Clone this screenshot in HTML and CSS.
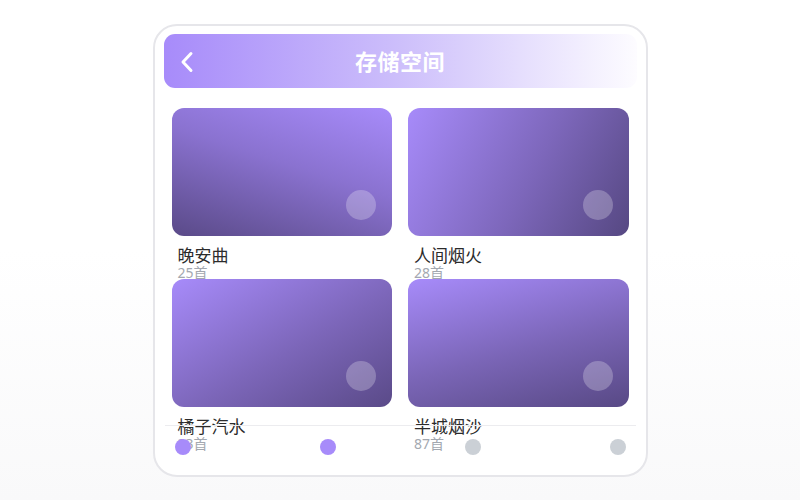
FILE: index.html
```html
<!DOCTYPE html>
<html lang="zh-CN">
<head>
  <meta charset="UTF-8">
  <meta name="viewport" content="width=device-width, initial-scale=1.0">
  <title>存储空间</title>
  <link rel="stylesheet" href="styles.css">
</head>
<body>
  <div class="phone">
    <div class="header">
      <span class="back">
        <svg width="14" height="22" viewBox="0 0 14 22"><polyline points="11,2.5 3,11 11,19.5" fill="none" stroke="#fff" stroke-width="3" stroke-linecap="round" stroke-linejoin="round"/></svg>
      </span>
      <h1>存储空间</h1>
    </div>

    <div class="grid">
      <div class="item">
        <div class="cover cover-1"><span class="play"></span></div>
        <div class="name">晚安曲</div>
        <div class="count">25首</div>
      </div>
      <div class="item">
        <div class="cover cover-2"><span class="play"></span></div>
        <div class="name">人间烟火</div>
        <div class="count">28首</div>
      </div>
      <div class="item">
        <div class="cover cover-3"><span class="play"></span></div>
        <div class="name">橘子汽水</div>
        <div class="count">23首</div>
      </div>
      <div class="item">
        <div class="cover cover-4"><span class="play"></span></div>
        <div class="name">半城烟沙</div>
        <div class="count">87首</div>
      </div>
    </div>

    <div class="nav">
      <span class="dot on"></span>
      <span class="dot on"></span>
      <span class="dot"></span>
      <span class="dot"></span>
    </div>
  </div>
</body>
</html>
```

FILE: styles.css
```css
html, body {
  height: 100%;
}
body {
  margin: 0;
  font-family: "Noto Sans", "Noto Sans CJK SC", sans-serif;
  background: linear-gradient(to bottom, #ffffff 0%, #ffffff 50%, #f9f9fa 100%);
}
.phone {
  position: relative;
  box-sizing: border-box;
  width: 495px;
  height: 453px;
  margin: 24px auto 0;
  padding: 8px 9px;
  border: 2px solid #e6e6ea;
  border-radius: 24px;
  background: #fff;
  overflow: hidden;
}
.header {
  position: relative;
  height: 54px;
  border-radius: 11px;
  background: linear-gradient(90deg, #a78bfa 0%, #cdbffb 50%, #fdfcff 100%);
  display: flex;
  align-items: center;
  justify-content: center;
}
.back {
  position: absolute;
  left: 16px;
  top: 17px;
  display: flex;
}
.header h1 {
  margin: 0 0 2px;
  font-size: 22px;
  font-weight: 700;
  color: #fff;
  letter-spacing: 0.5px;
}
.grid {
  display: grid;
  grid-template-columns: 1fr 1fr;
  column-gap: 16px;
  padding: 20px 8px 0;
}
.item {
  display: flex;
  flex-direction: column;
}
.cover {
  position: relative;
  height: 128px;
  border-radius: 12px;
}
.cover-1 {
  background: linear-gradient(18deg, #5a4a88 0%, #8a72d0 55%, #a78bfa 100%);
}
.cover-2 {
  background: linear-gradient(118deg, #a78bfa 0%, #7d67bb 55%, #564882 100%);
}
.cover-3 {
  background: linear-gradient(150deg, #a78bfa 0%, #7c66b9 55%, #5a4a88 100%);
}
.cover-4 {
  background: linear-gradient(165deg, #a78bfa 0%, #7a65b6 55%, #584985 100%);
}
.play {
  position: absolute;
  right: 16px;
  bottom: 16px;
  width: 30px;
  height: 30px;
  border-radius: 50%;
  background: rgba(255, 255, 255, 0.25);
}
.name {
  margin: 10px 0 0 6px;
  font-size: 17px;
  line-height: 20px;
  color: #2b2b2b;
}
.count {
  margin-left: 6px;
  font-size: 14px;
  line-height: 13px;
  color: #a3a8b0;
}
.nav {
  position: absolute;
  left: 10px;
  right: 10px;
  bottom: 0;
  height: 50px;
  box-sizing: border-box;
  padding: 13px 10px 0;
  border-top: 1px solid #ececef;
  display: flex;
  justify-content: space-between;
  align-items: flex-start;
}
.dot {
  width: 16px;
  height: 16px;
  border-radius: 50%;
  background: #cbd0d6;
}
.dot.on {
  background: #a78bfa;
}
```
